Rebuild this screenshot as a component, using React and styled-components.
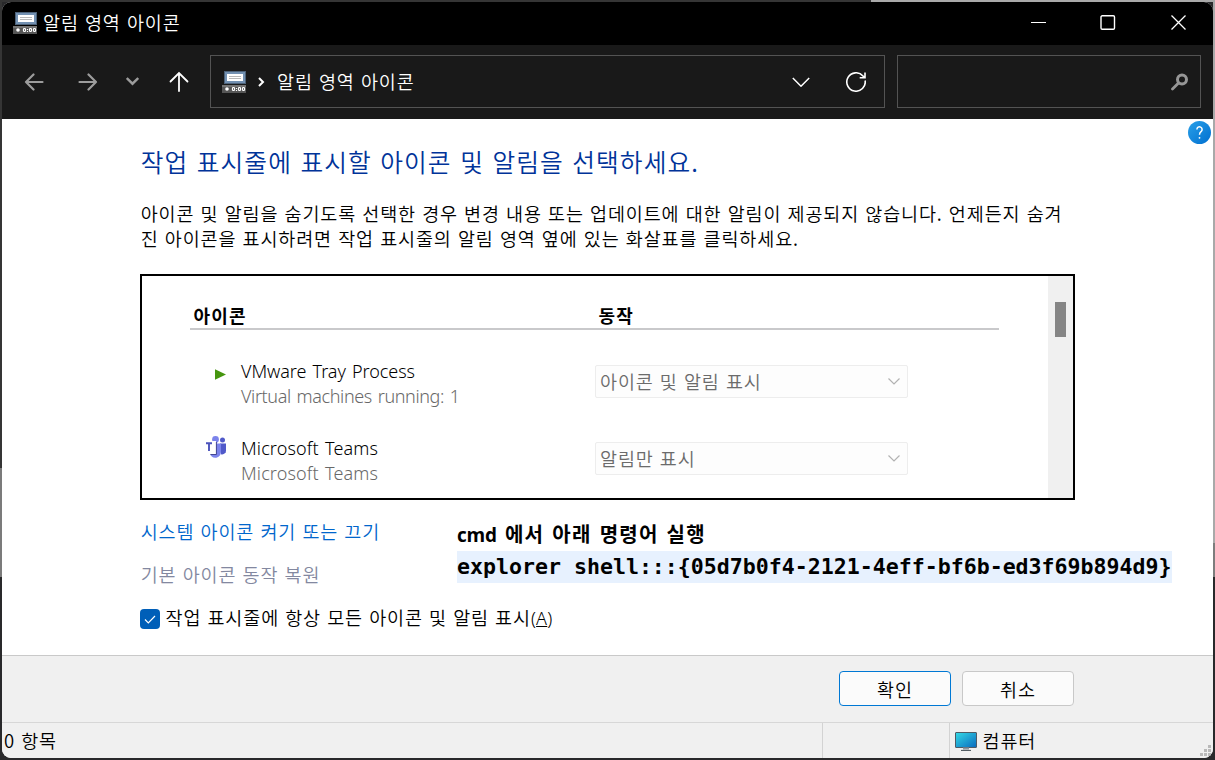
import React from "react";
import styled, { createGlobalStyle } from "styled-components";

const Global = createGlobalStyle`
  *, *::before, *::after { box-sizing: border-box; }
  body { margin: 0; overflow: hidden; }
  svg { display: block; flex: none; }
`;

const Desktop = styled.div`
  width: 1215px;
  height: 760px;
  padding: 2px;
  background:
    linear-gradient(90deg, #353535 0 871px, #a9a9a9 871px) 0 0 / 100% 2px no-repeat,
    linear-gradient(#a9a9a9 0 543px, #7d7d7d 543px 577px, #29292b 577px) 1213px 0 / 2px 100% no-repeat,
    linear-gradient(#353535 0 468px, #7b7b7b 468px 577px, #29292b 577px) 0 0 / 2px 100% no-repeat,
    #29292b;
  font-family: "Noto Sans CJK KR", sans-serif;
  font-weight: 350;
  font-size: 18.5px;
  letter-spacing: 0.87px;
  word-spacing: 1.2px;
  color: #000;
  white-space: nowrap;
`;

const Window = styled.div`
  width: 1211px;
  height: 756px;
  display: flex;
  flex-direction: column;
  background: #fff;
  border-radius: 9px;
  overflow: hidden;
`;

const TitleBar = styled.header`
  height: 43px;
  flex: none;
  display: flex;
  align-items: center;
  padding: 0 0 2px 11px;
  background: #000;
  color: #fff;
`;

const TitleText = styled.span`
  flex: 1;
  margin-left: 6px;
  line-height: 41px;
`;

const Controls = styled.div`
  display: flex;
  gap: 54px;
  padding-right: 27px;
`;

const Toolbar = styled.nav`
  height: 74px;
  flex: none;
  display: flex;
  align-items: center;
  padding: 0 12px 1px 22px;
  background: #191919;
  color: #fff;
`;

const NavIcons = styled.div`
  width: 186px;
  flex: none;
  display: flex;
  align-items: center;
`;

const NavIcon = styled.svg`
  margin-left: ${(p) => p.$before || 0}px;
  margin-right: ${(p) => p.$gap || 0}px;
`;

const Field = styled.div`
  width: ${(p) => p.$width}px;
  height: 53px;
  display: flex;
  align-items: center;
  border: 1px solid #535353;
  padding: 0 ${(p) => p.$right}px 0 11px;
`;

const Crumb = styled.span`
  flex: 1;
  margin-left: 12px;
  line-height: 51px;
`;

const Search = styled(Field)`
  margin-left: 12px;
  justify-content: flex-end;
`;

const Content = styled.main`
  height: 536px;
  flex: none;
  position: relative;
  padding: 24px 0 0 138px;
`;

const Help = styled.svg`
  position: absolute;
  top: 2px;
  right: 2px;
`;

const Heading = styled.h1`
  margin: 0;
  padding-left: 0.7px;
  font-size: 24.7px;
  font-weight: inherit;
  line-height: 36px;
  letter-spacing: 1.08px;
  word-spacing: 1.9px;
  color: #003399;
`;

const Description = styled.p`
  margin: 22px 0 0;
  padding-left: 0.7px;
  line-height: 25px;
`;

const ListBox = styled.section`
  width: 935px;
  height: 226px;
  margin-top: 23px;
  display: flex;
  justify-content: space-between;
  border: 2px solid #000;
`;

const Table = styled.div`
  width: 809px;
  margin: 26px 0 0 48px;
`;

const Columns = styled.div`
  display: grid;
  grid-template-columns: 405px 1fr;
  height: 28px;
  padding-left: 3.5px;
  border-bottom: 2px solid #c9c9cb;
  font-weight: 700;
  font-size: 18px;
  line-height: 27px;
  letter-spacing: 1.2px;
`;

const Row = styled.div`
  display: grid;
  grid-template-columns: 51px 354px 1fr;
  height: 77px;
  padding-top: 29px;
`;

const IconCell = styled.div`
  padding: ${(p) => p.$pad};
`;

const Names = styled.div`
  display: flex;
  flex-direction: column;
  font-family: "Noto Sans", "Open Sans", sans-serif;
  font-weight: 300;
  font-size: 18px;
  word-spacing: 1.5px;
  line-height: 25px;
`;

const Name = styled.span`
  letter-spacing: ${(p) => p.$track}px;
`;

const Sub = styled(Name)`
  color: #686868;
`;

const Select = styled.div`
  width: 313px;
  height: 33px;
  margin-top: 6px;
  display: flex;
  align-items: center;
  justify-content: space-between;
  padding: 0 7px 1px 4px;
  border: 1px solid #ededed;
  border-radius: 2px;
  background: #fdfdfd;
  color: #6b6b6b;
`;

const ScrollTrack = styled.div`
  width: 25px;
  padding: 26px 0 0 7px;
  background: #f0f0f0;
`;

const ScrollThumb = styled.div`
  width: 11px;
  height: 35px;
  background: #858585;
`;

const Lower = styled.div`
  display: grid;
  grid-template-columns: 317px 1fr;
  margin-top: 17px;
`;

const Links = styled.div`
  display: flex;
  flex-direction: column;
  gap: 15px;
`;

const Link = styled.a`
  padding-left: 0.7px;
  line-height: 28px;
  color: ${(p) => (p.$muted ? "#8388a0" : "#0066cc")};
`;

const Note = styled.div`
  padding-top: 1px;
`;

const NoteTitle = styled.div`
  font-weight: 700;
  font-size: 20px;
  line-height: 32px;
  letter-spacing: 1.2px;
  word-spacing: 2.4px;
`;

const NoteLatin = styled.span`
  font-family: "Open Sans", sans-serif;
  font-size: 19px;
  letter-spacing: -0.2px;
`;

const Command = styled.code`
  display: block;
  width: 715px;
  height: 32px;
  background: #e7f1fe;
  font: 700 21.58px/32px "DejaVu Sans Mono", monospace;
  letter-spacing: 0;
  word-spacing: 0;
`;

const CheckRow = styled.label`
  display: flex;
  align-items: center;
  gap: 5.5px;
  height: 28px;
  margin-top: 15px;
`;

const CheckBox = styled.span`
  width: 20px;
  height: 20px;
  margin-top: 3px;
  border-radius: 4px;
  background: #005fb8;
`;

const Key = styled.span`
  font-family: "Noto Sans", sans-serif;
  font-size: 18px;
  letter-spacing: 0.2px;
`;

const Footer = styled.footer`
  height: 67px;
  flex: none;
  display: flex;
  justify-content: flex-end;
  gap: 11px;
  padding: 15px 139px 0 0;
  border-top: 1px solid #c9c9c9;
  background: #f0f0f0;
`;

const Button = styled.button`
  width: 112px;
  height: 35px;
  padding: 0;
  border: 1px solid ${(p) => (p.$primary ? "#0078d4" : "#c8c8c8")};
  border-radius: 4px;
  background: #fbfbfb;
  font: inherit;
  line-height: 32px;
  letter-spacing: inherit;
  color: #000;
`;

const StatusBar = styled.div`
  flex: 1;
  display: flex;
  border-top: 1px solid #d7d7d7;
  background: #f0f0f0;
  line-height: 35px;
`;

const StatusCell = styled.div`
  width: ${(p) => p.$width}px;
  display: flex;
  align-items: center;
  gap: 5.5px;
  padding-left: ${(p) => p.$pad || 0}px;
  border-right: ${(p) => (p.$last ? 0 : 1)}px solid #d3d3d3;
`;

const Grip = styled.svg`
  align-self: flex-end;
  margin: 0 2px 2px auto;
`;

function TrayIcon() {
  return (
    <svg width="24" height="22" viewBox="0 0 24 22">
      <rect x="2" y="0" width="22" height="13" fill="#4d6279" />
      <rect x="3" y="1" width="20" height="11" fill="#7391b2" />
      <rect x="5" y="3" width="16" height="7" fill="#fff" />
      <path d="M7 5.500h12M7 7.500h12" stroke="#b8b8b8" />
      <rect x="0" y="14" width="24" height="8" fill="#565656" />
      <rect x="0" y="14" width="24" height="2" fill="#747474" />
      <circle cx="5" cy="18" r="1.800" fill="#fff" />
      <g fill="none" stroke="#fff" strokeWidth="1.200">
        <rect x="10.500" y="16.500" width="2" height="3" rx=".8" />
        <rect x="16.500" y="16.500" width="2" height="3" rx=".8" />
        <rect x="20.500" y="16.500" width="2" height="3" rx=".8" />
        <path d="M14.500 17v1M14.500 19v1" />
      </g>
    </svg>
  );
}

function Chevron({ width, color, thick = 1.4, gap }) {
  return (
    <NavIcon $gap={gap} width={width} height="10" viewBox={`0 0 ${width} 10`} fill="none" stroke={color} strokeWidth={thick}>
      <path d={`M.8 1l${width / 2 - 0.8} ${width / 2 - 0.8}L${width - 0.8} 1`} />
    </NavIcon>
  );
}

function TeamsIcon() {
  return (
    <svg width="22" height="22" viewBox="0 0 22 22">
      <circle cx="10.500" cy="3.500" r="3.400" fill="#7b83eb" />
      <circle cx="17.500" cy="4" r="2.500" fill="#5059c9" />
      <path d="M15 7.500h6v7.300c0 2.500-2.500 4.200-5 3.400z" fill="#5059c9" />
      <path d="M5 7.500h11v8c0 3.800-2.500 6.300-5.800 6.300-2.800 0-4.700-1.700-5.200-4.300z" fill="#7b83eb" />
      <path d="M0 5h11v13H5V16H0z" fill="#fff" />
      <path d="M11.400 6v12.500H5.500" fill="none" stroke="#444791" strokeWidth="1" />
      <path d="M1 7.200h6M4 7v8" stroke="#4b53bc" strokeWidth="1.900" />
    </svg>
  );
}

const rows = [
  { name: "VMware Tray Process", track: -0.05, sub: "Virtual machines running: 1", subTrack: -0.38, action: "아이콘 및 알림 표시", icon: "play" },
  { name: "Microsoft Teams", track: 0.13, sub: "Microsoft Teams", subTrack: 0.13, action: "알림만 표시", icon: "teams" },
];

export default function App() {
  return (
    <Desktop>
      <Global />
      <Window>
        <TitleBar>
          <TrayIcon />
          <TitleText>알림 영역 아이콘</TitleText>
          <Controls>
            <svg width="16" height="16" viewBox="0 0 16 16" stroke="#fff"><path d="M1 7.500h15" /></svg>
            <svg width="16" height="16" viewBox="0 0 16 16" fill="none" stroke="#fff" strokeWidth="1.400"><rect x="1" y=".8" width="13.500" height="13.500" rx="1.200" /></svg>
            <svg width="16" height="16" viewBox="0 0 16 16" stroke="#fff" strokeWidth="1.300"><path d="M1.500 .5l14 14M15.500 .5l-14 14" /></svg>
          </Controls>
        </TitleBar>
        <Toolbar>
          <NavIcons>
            <NavIcon $gap={34} width="20" height="18" viewBox="0 0 20 18" fill="none" stroke="#9c9c9c" strokeWidth="2.200" strokeLinecap="round" strokeLinejoin="round">
              <path d="M18.500 9H2M9.500 1.500L2 9l7.500 7.500" />
            </NavIcon>
            <NavIcon $gap={28} width="20" height="18" viewBox="0 0 20 18" fill="none" stroke="#9c9c9c" strokeWidth="2.200" strokeLinecap="round" strokeLinejoin="round">
              <path d="M1.500 9h16.500M10.500 1.500L18 9l-7.500 7.500" />
            </NavIcon>
            <Chevron width={13} color="#9c9c9c" thick={2.4} gap={30} />
            <svg width="20" height="21" viewBox="0 0 20 21" fill="none" stroke="#fff" strokeWidth="1.800" strokeLinecap="round">
              <path d="M10 20V2M1.500 10.500L10 2l8.500 8.500" />
            </svg>
          </NavIcons>
          <Field $width={675} $right={18}>
            <TrayIcon />
            <NavIcon $before={12} width="7" height="10" viewBox="0 0 7 10" fill="none" stroke="#fff" strokeWidth="2">
              <path d="M1 1l4 4-4 4" />
            </NavIcon>
            <Crumb>알림 영역 아이콘</Crumb>
            <Chevron width={18} color="#fff" thick={1.5} gap={36} />
            <svg width="20" height="20" viewBox="0 0 20 20" fill="none" stroke="#fff" strokeWidth="1.600">
              <path d="M19.100 8.500A9.200 9.200 0 1 1 17 4l1.500 1.800M19 .5v5.300h-5.300" />
            </svg>
          </Field>
          <Search $width={304} $right={12}>
            <svg width="17" height="18" viewBox="0 0 17 18" fill="none" stroke="#969696">
              <circle cx="11" cy="6.500" r="4.500" strokeWidth="3" />
              <path d="M7.500 10L1.500 16" strokeWidth="2.800" strokeLinecap="round" />
            </svg>
          </Search>
        </Toolbar>
        <Content>
          <Help width="23" height="23" viewBox="0 0 23 23">
            <defs>
              <linearGradient id="help" x1="0" y1="0" x2="1" y2="1">
                <stop offset="0" stopColor="#2aa0e8" />
                <stop offset="1" stopColor="#006fd0" />
              </linearGradient>
            </defs>
            <circle cx="11.500" cy="11.500" r="11.500" fill="url(#help)" />
            <path d="M8.900 8.400a2.600 2.600 0 1 1 4.300 2c-1.100.9-1.700 1.500-1.700 3.400" fill="none" stroke="#fff" strokeWidth="1.500" />
            <circle cx="11.500" cy="16.800" r=".9" fill="#fff" />
          </Help>
          <Heading>작업 표시줄에 표시할 아이콘 및 알림을 선택하세요.</Heading>
          <Description>
            아이콘 및 알림을 숨기도록 선택한 경우 변경 내용 또는 업데이트에 대한 알림이 제공되지 않습니다. 언제든지 숨겨
            <br />진 아이콘을 표시하려면 작업 표시줄의 알림 영역 옆에 있는 화살표를 클릭하세요.
          </Description>
          <ListBox>
            <Table>
              <Columns>
                <span>아이콘</span>
                <span>동작</span>
              </Columns>
              {rows.map((row) => (
                <Row key={row.name}>
                  <IconCell $pad={row.icon === "play" ? "10px 0 0 25px" : "0 0 0 15px"}>
                    {row.icon === "play" ? (
                      <svg width="11" height="11" viewBox="0 0 11 11"><path d="M0 .3L11 5.500 0 10.700z" fill="#46960f" /></svg>
                    ) : (
                      <TeamsIcon />
                    )}
                  </IconCell>
                  <Names>
                    <Name $track={row.track}>{row.name}</Name>
                    <Sub $track={row.subTrack}>{row.sub}</Sub>
                  </Names>
                  <Select>
                    <span>{row.action}</span>
                    <svg width="12" height="8" viewBox="0 0 12 8" fill="none" stroke="#b2b2b2" strokeWidth="1.200">
                      <path d="M.5 1.500L6 7 11.500 1.500" />
                    </svg>
                  </Select>
                </Row>
              ))}
            </Table>
            <ScrollTrack><ScrollThumb /></ScrollTrack>
          </ListBox>
          <Lower>
            <Links>
              <Link>시스템 아이콘 켜기 또는 끄기</Link>
              <Link $muted>기본 아이콘 동작 복원</Link>
            </Links>
            <Note>
              <NoteTitle><NoteLatin>cmd</NoteLatin> 에서 아래 명령어 실행</NoteTitle>
              <Command>{"explorer shell:::{05d7b0f4-2121-4eff-bf6b-ed3f69b894d9}"}</Command>
            </Note>
          </Lower>
          <CheckRow>
            <CheckBox>
              <svg width="20" height="20" viewBox="0 0 20 20" fill="none" stroke="#fff" strokeWidth="1.200"><path d="M5 10.500l3.300 3.300L15 7" /></svg>
            </CheckBox>
            <span>작업 표시줄에 항상 모든 아이콘 및 알림 표시<Key>(<u>A</u>)</Key></span>
          </CheckRow>
        </Content>
        <Footer>
          <Button $primary>확인</Button>
          <Button>취소</Button>
        </Footer>
        <StatusBar>
          <StatusCell $width={821} $pad={2}>0 항목</StatusCell>
          <StatusCell $width={127} />
          <StatusCell $width={140} $pad={5} $last>
            <svg width="22" height="20" viewBox="0 0 22 20">
              <defs>
                <linearGradient id="screen" x1="0" y1="0" x2="1" y2="1">
                  <stop offset="0" stopColor="#35dbe6" />
                  <stop offset="1" stopColor="#0869be" />
                </linearGradient>
              </defs>
              <rect x=".5" y="1.500" width="21" height="15" rx=".5" fill="url(#screen)" stroke="#4e5b66" />
              <path d="M8 17.500h6" stroke="#8a959e" strokeWidth="2" />
              <path d="M6 19.400h10" stroke="#3f4a52" />
            </svg>
            컴퓨터
          </StatusCell>
          <Grip width="11" height="11" viewBox="0 0 11 11" fill="#b9b9b9">
            <path d="M8 0h3v3H8zM4 4h3v3H4zM8 4h3v3H8zM0 8h3v3H0zM4 8h3v3H4zM8 8h3v3H8z" />
          </Grip>
        </StatusBar>
      </Window>
    </Desktop>
  );
}
